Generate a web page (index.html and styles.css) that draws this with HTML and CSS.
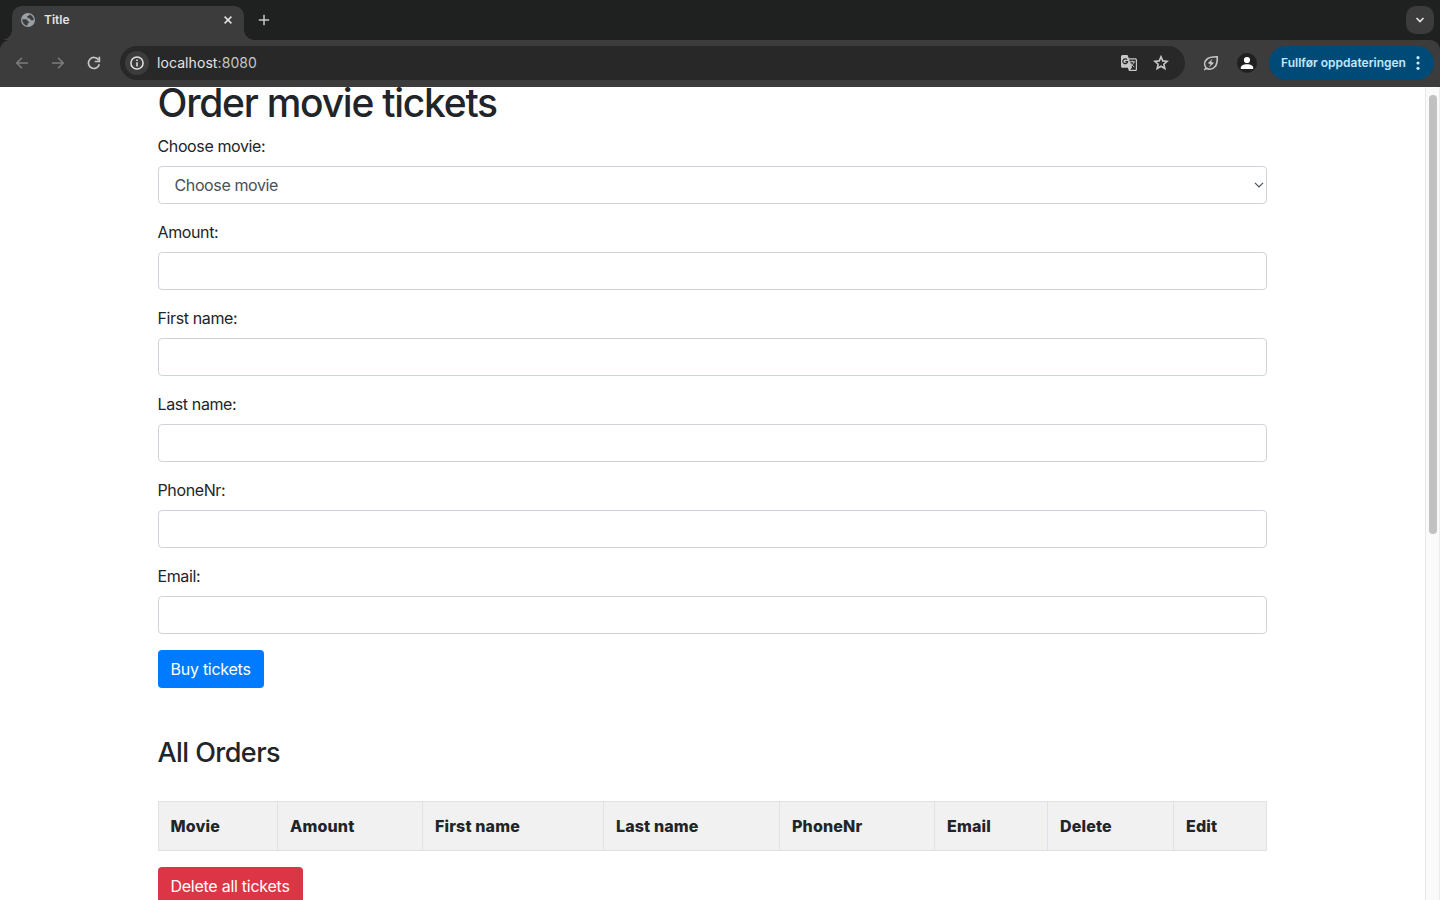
FILE: index.html
```html
<!DOCTYPE html>
<html lang="en">
<head>
<meta charset="utf-8">
<title>Title</title>
<link rel="stylesheet" href="styles.css">
</head>
<body>
<div class="browser">
  <header class="tabstrip">
    <div class="tab">
      <svg class="globe" viewBox="0 0 14 14" width="14" height="14"><circle cx="7" cy="7" r="7" fill="#9aa0a6"/><path d="M1.3 6.2h3.2c1.5 0 2.2.8 2.2 2.2h1.5c.4 1.3-.8 1.8-1.6 2v2.2C3.500 12.400 1.300 9.900 1.300 6.200zM8.300 1.500c-.2 1.300-1 1.700-2 1.600v1.500c.6 1 1.300.5 2.200.7.800.4.700 1.700 1.700 1.900h2.600C12.800 4.600 11.100 2.200 8.300 1.500z" fill="#3c3c3c"/></svg>
      <span class="tab-title">Title</span>
      <svg class="close" viewBox="0 0 8 8" width="8" height="8"><path d="M.6.6l6.800 6.800M7.400.6L.6 7.400" stroke="#e3e3e3" stroke-width="1.500"/></svg>
    </div>
    <svg class="plus" viewBox="0 0 12 12" width="12" height="12"><path d="M6 .8v10.400M.8 6h10.400" stroke="#c7c7c7" stroke-width="1.500"/></svg>
    <div class="tab-search"><svg viewBox="0 0 10 10" width="10" height="10"><path d="M1.500 3L5 6.500 8.500 3" fill="none" stroke="#e3e3e3" stroke-width="1.700"/></svg></div>
  </header>
  <nav class="toolbar">
    <div class="nav-icons">
      <svg viewBox="0 0 14 14" width="14" height="14"><path d="M13 7H2M7 1.700L1.700 7 7 12.300" fill="none" stroke="#7e7e7e" stroke-width="1.500"/></svg>
      <svg viewBox="0 0 14 14" width="14" height="14"><path d="M1 7h11M7 1.700L12.300 7 7 12.300" fill="none" stroke="#7e7e7e" stroke-width="1.500"/></svg>
      <svg viewBox="0 0 14 14" width="14" height="14"><path d="M12.300 8.300A5.500 5.500 0 1 1 11.600 4" fill="none" stroke="#c7c7c7" stroke-width="1.700"/><path d="M13.200.8v5.400H7.800V4.700h3.700V.8z" fill="#c7c7c7"/></svg>
    </div>
    <div class="address">
      <span class="site-info"><svg viewBox="0 0 14 14" width="14" height="14"><circle cx="7" cy="7" r="6.100" fill="none" stroke="#e3e3e3" stroke-width="1.500"/><path d="M7 6.200v4.200M7 3.600v1.500" stroke="#e3e3e3" stroke-width="1.500"/></svg></span>
      <span class="url">localhost<span class="port">:8080</span></span>
      <svg class="translate" viewBox="0 0 18 18" width="18" height="18"><path d="M2.500 1h5l1.300 3.300H15.500Q17 4.300 17 5.800v9.700Q17 17 15.500 17H9l-1.200-3.300H2.500Q1 13.700 1 12.200V2.500Q1 1 2.500 1z" fill="#c7c7c7"/><path d="M9.200 5.500h6.100q.5 0 .5.500v9.300q0 .5-.5.500h-5.200l2-2.200z" fill="#282828"/><path d="M7.100 5.700A2.400 2.400 0 1 0 7.600 7.700H5.300" fill="none" stroke="#282828" stroke-width="1.200"/><path d="M9.700 7.800h5.300M12.300 6.500v1.300M14 7.900c-.5 2-1.800 3.300-3.500 4.500M10.800 9.200c.7 1.500 1.700 2.500 3.500 3.800" fill="none" stroke="#c7c7c7" stroke-width="1"/></svg>
      <svg class="star" viewBox="0 0 16 16" width="16" height="16"><path d="M8 1.800l1.750 4.100 4.450.4-3.380 2.900 1.020 4.350L8 11.200l-3.840 2.350 1.020-4.350L1.800 6.300l4.450-.4z" fill="none" stroke="#c7c7c7" stroke-width="1.600"/></svg>
    </div>
    <svg class="leaf" viewBox="0 0 16 16" width="16" height="16"><path d="M3.200 13C1 10.300 1.200 6.600 3.700 4.300 6.200 2.100 9.500 1.700 14.200 1.800c.3 4.700-.2 7.800-2.300 10-2.400 2.500-6 3-8.700 1.200zM3.400 12.800L1.200 15" fill="none" stroke="#c7c7c7" stroke-width="1.600"/><path d="M9.500 3.800L4.700 8.300l2.800.6-1.500 3.500 5-4.700-2.900-.6z" fill="#c7c7c7"/></svg>
    <span class="avatar"><svg viewBox="0 0 14 14" width="14" height="14"><circle cx="7" cy="4" r="3.100" fill="#fff"/><path d="M.8 13v-1.200C.8 9.600 3.500 8.300 7 8.300s6.200 1.300 6.200 3.500V13z" fill="#fff"/></svg></span>
    <div class="update"><span class="update-text">Fullfør oppdateringen</span><svg viewBox="0 0 4 14" width="4" height="14"><g fill="#c2e7ff"><circle cx="2" cy="1.700" r="1.600"/><circle cx="2" cy="7" r="1.600"/><circle cx="2" cy="12.300" r="1.600"/></g></svg></div>
  </nav>
  <div class="viewport">
    <main class="container">
      <h1>Order movie tickets</h1>
      <form>
        <div class="group"><label>Choose movie:</label><div class="control select"><span>Choose movie</span><svg viewBox="0 0 10 6" width="10" height="6"><path d="M1 .8l4 4 4-4" fill="none" stroke="#495057" stroke-width="1.200"/></svg></div></div>
        <div class="group"><label>Amount:</label><div class="control"></div></div>
        <div class="group"><label>First name:</label><div class="control"></div></div>
        <div class="group"><label>Last name:</label><div class="control"></div></div>
        <div class="group"><label>PhoneNr:</label><div class="control"></div></div>
        <div class="group"><label>Email:</label><div class="control"></div></div>
        <button type="button" class="btn buy">Buy tickets</button>
      </form>
      <h2>All Orders</h2>
      <table>
        <colgroup><col class="c1"><col class="c2"><col class="c3"><col class="c4"><col class="c5"><col class="c6"><col class="c7"><col></colgroup>
        <tr><th>Movie</th><th>Amount</th><th>First name</th><th>Last name</th><th>PhoneNr</th><th>Email</th><th>Delete</th><th>Edit</th></tr>
      </table>
      <button type="button" class="btn delete">Delete all tickets</button>
    </main>
    <aside class="scrollbar"><div class="thumb"></div></aside>
  </div>
</div>
</body>
</html>
```
FILE: styles.css
```css
* { box-sizing: border-box; }
body { margin: 0; overflow: hidden; font-family: Inter, sans-serif; font-size: 16px; line-height: 24px; color: #212529; background: #fff; }
svg { display: block; flex: none; }
.browser { width: 1440px; height: 900px; display: flex; flex-direction: column; overflow: hidden; background: #1f2120; }

.tabstrip { height: 40px; flex: none; display: flex; padding: 6px 6px 0 12px; }
.tab { position: relative; width: 232px; height: 34px; padding: 0 12px 6px 9px; display: flex; align-items: center; background: #3c3c3c; border-radius: 10px 10px 0 0; }
.tab::before, .tab::after { content: ""; position: absolute; bottom: 0; width: 10px; height: 10px; }
.tab::before { left: -10px; background: radial-gradient(circle at 0 0, transparent 9.5px, #3c3c3c 10px); }
.tab::after { right: -10px; background: radial-gradient(circle at 100% 0, transparent 9.5px, #3c3c3c 10px); }
.tab-title { margin-left: 9px; font-size: 12px; font-weight: 600; color: #e3e3e3; }
.close { margin-left: auto; }
.plus { margin: 8px 0 0 14px; }
.tab-search { width: 28px; height: 28px; margin-left: auto; display: grid; place-items: center; border-radius: 10px; background: #3c3c3c; }

.toolbar { height: 47px; flex: none; display: flex; align-items: center; padding: 0 6px 1px 15px; background: #3c3c3c; border-radius: 10px 10px 0 0; }
.nav-icons { display: flex; gap: 22px; }
.address { width: 1065px; height: 34px; margin-left: 19px; padding: 0 16px 0 5px; display: flex; align-items: center; border-radius: 17px; background: #282828; }
.site-info { width: 24px; height: 24px; display: grid; place-items: center; border-radius: 50%; background: #3c3c3c; }
.url { margin-left: 8px; font-size: 14px; letter-spacing: .08px; color: #e3e3e3; }
.port { color: #c7c7c7; }
.translate { margin-left: auto; }
.star { margin-left: 15px; }
.leaf { margin-left: 18px; }
.avatar { width: 20px; height: 20px; margin-left: 18px; display: grid; place-items: center; border-radius: 50%; background: #1f2120; }
.update { width: 165px; height: 34px; margin-left: 12px; padding: 0 14px 0 12px; display: flex; align-items: center; justify-content: space-between; border-radius: 17px; background: #004a77; color: #c2e7ff; font-size: 12px; font-weight: 600; white-space: nowrap; }

.viewport { flex: 1; min-height: 0; display: flex; justify-content: space-between; overflow: hidden; background: #fff; }
.container { width: 1109.5px; height: 830px; margin-left: 157.5px; letter-spacing: -.38px; }
h1 { margin: 0 0 15px; font-size: 39px; line-height: 32px; font-weight: 500; letter-spacing: -1.25px; }
.group { margin-bottom: 16px; }
label { display: block; width: max-content; margin-bottom: 8px; }
.control { height: 38px; border: 1px solid #ced4da; border-radius: 4px; background: #fff; }
.select { display: flex; align-items: center; justify-content: space-between; padding: 0 2px 0 16px; color: #495057; }
.btn { display: block; height: 38px; padding: 0 13px; border: 0; border-radius: 4px; font: inherit; letter-spacing: -.26px; color: #fff; white-space: nowrap; }
.buy { width: 106px; background: #007bff; }
.delete { width: 145px; margin-top: 16px; background: #dc3545; }
h2 { margin: 48px 0 32px; font-size: 27px; line-height: 33px; font-weight: 500; letter-spacing: -.56px; }
table { width: 1109.5px; height: 50px; table-layout: fixed; border-collapse: collapse; }
th { padding: 0 12px; border: 1px solid #dee2e6; background: #f1f1f1; text-align: left; font-weight: 800; letter-spacing: .15px; white-space: nowrap; }
.c1 { width: 119.5px; }
.c2 { width: 145px; }
.c3 { width: 181px; }
.c4 { width: 176px; }
.c5 { width: 155px; }
.c6 { width: 113px; }
.c7 { width: 126px; }
.scrollbar { width: 15px; padding: 8px 3px 0; background: #fafafa; border-left: 1px solid #e8e8e8; border-right: 1px solid #ececec; }
.thumb { width: 8px; height: 439px; border-radius: 4px; background: #c1c1c1; }
```
